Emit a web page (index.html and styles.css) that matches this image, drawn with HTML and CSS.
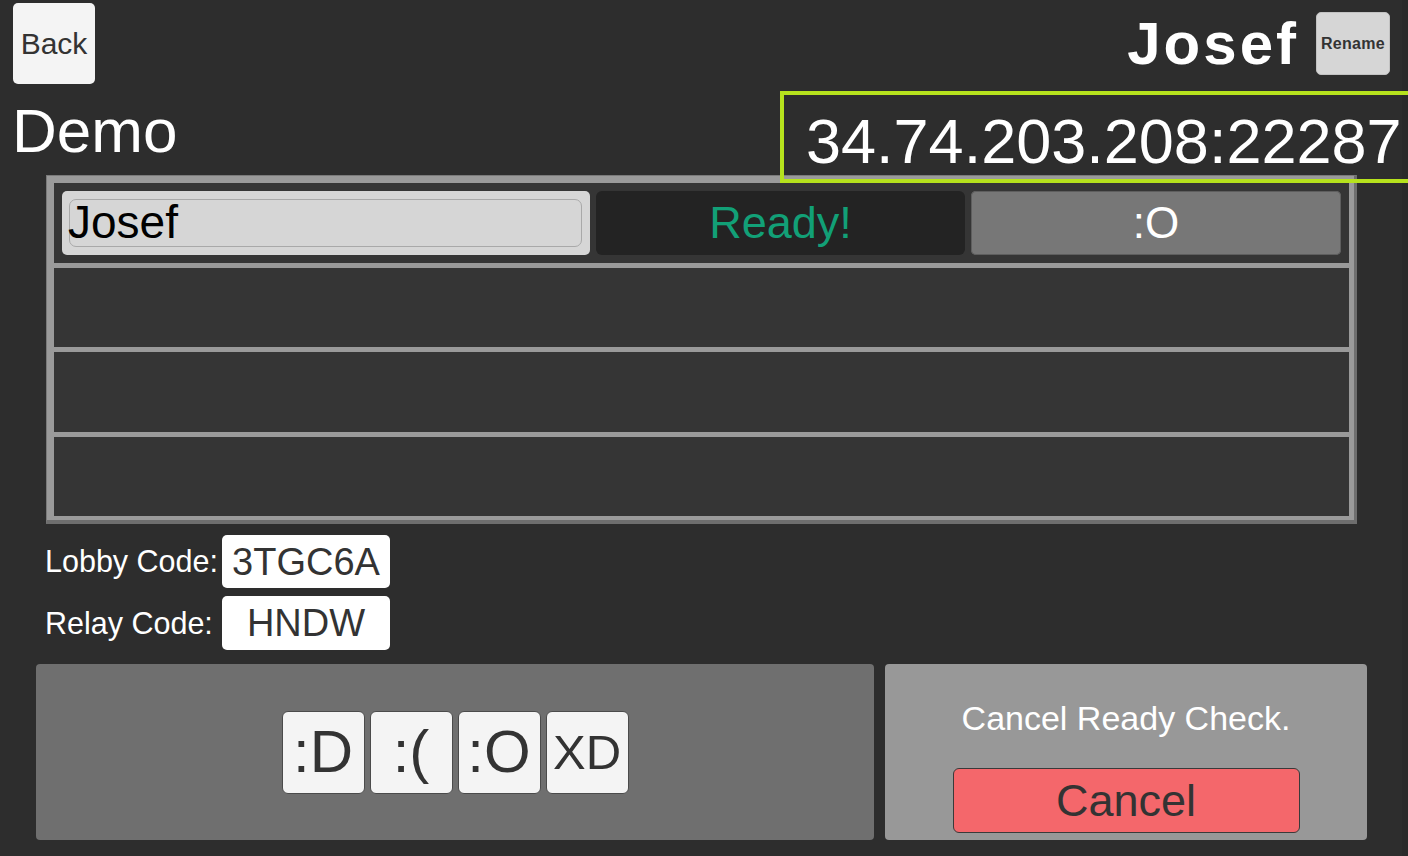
FILE: index.html
```html
<!DOCTYPE html>
<html lang="en">
<head>
<meta charset="utf-8">
<title>Lobby - Demo</title>
<link rel="stylesheet" href="styles.css">
</head>
<body>
<div class="screen">
  <header class="top">
    <button class="btn back">Back</button>
    <div class="user">
      <span class="user-name">Josef</span>
      <button class="btn rename">Rename</button>
    </div>
  </header>

  <div class="title-row">
    <h1 class="lobby-name">Demo</h1>
    <div class="address">34.74.203.208:22287</div>
  </div>

  <section class="players">
    <div class="player-row filled">
      <div class="name-field"><div class="name-inner">Josef</div></div>
      <div class="status">Ready!</div>
      <div class="emote">:O</div>
    </div>
    <div class="player-row"></div>
    <div class="player-row"></div>
    <div class="player-row"></div>
  </section>

  <div class="codes">
    <div class="code-line">
      <span class="code-label">Lobby Code:</span>
      <span class="code-box">3TGC6A</span>
    </div>
    <div class="code-line second">
      <span class="code-label">Relay Code:</span>
      <span class="code-box tall">HNDW</span>
    </div>
  </div>

  <div class="bottom">
    <div class="emotes-panel">
      <button class="btn emoji">:D</button>
      <button class="btn emoji">:(</button>
      <button class="btn emoji">:O</button>
      <button class="btn emoji small">XD</button>
    </div>
    <div class="ready-panel">
      <p class="ready-text">Cancel Ready Check.</p>
      <button class="btn cancel">Cancel</button>
    </div>
  </div>
</div>
</body>
</html>
```

FILE: styles.css
```css
html, body {
  margin: 0;
  padding: 0;
}

body {
  width: 1408px;
  height: 856px;
  overflow: hidden;
  background: #2a2a2a;
  font-family: "Liberation Sans", Arial, sans-serif;
}

.screen {
  width: 1402px;
  height: 856px;
  background: #2d2d2d;
}

.btn {
  font-family: inherit;
  padding: 0;
  margin: 0;
  border: none;
  cursor: pointer;
}

/* ---------- top bar ---------- */
.top {
  height: 91px;
  box-sizing: border-box;
  display: flex;
  justify-content: space-between;
  align-items: flex-start;
  padding: 3px 12px 0 13px;
}

.back {
  width: 82px;
  height: 81px;
  background: #f4f4f4;
  border-radius: 5px;
  color: #333;
  font-size: 30px;
  padding-top: 0;
  line-height: 1;
}

.user {
  display: flex;
  align-items: center;
  gap: 17px;
  margin-top: 9px;
}

.user-name {
  color: #fff;
  font-size: 60px;
  font-weight: bold;
  letter-spacing: 3px;
  line-height: 1;
}

.rename {
  width: 74px;
  height: 63px;
  background: #d6d6d6;
  border: 1px solid #c2c2c2;
  border-radius: 5px;
  color: #333;
  font-size: 16px;
  font-weight: bold;
  letter-spacing: 0.3px;
}

/* ---------- title row ---------- */
.title-row {
  height: 84px;
  display: flex;
  align-items: flex-start;
  position: relative;
  z-index: 1;
}

.lobby-name {
  margin: 9px 0 0 12px;
  color: #fff;
  font-size: 62px;
  font-weight: normal;
  line-height: 62px;
}

.address {
  margin-left: auto;
  margin-right: -6px;
  width: 628px;
  height: 92px;
  box-sizing: border-box;
  border: 4px solid #b6e21d;
  border-right: none;
  padding: 4px 0 0 22px;
  color: #fff;
  font-size: 63px;
  line-height: 84px;
  white-space: nowrap;
}

/* ---------- players panel ---------- */
.players {
  margin-left: 46px;
  width: 1311px;
  height: 349px;
  box-sizing: border-box;
  background: #9a9a9a;
  padding: 7px 5px 4px 7px;
  border-right: 3px solid #6e6e6e;
  border-bottom: 4px solid #6e6e6e;
  border-top: 1px solid #7a7a7a;
  border-left: 1px solid #7a7a7a;
  display: grid;
  grid-template-rows: repeat(4, 1fr);
  row-gap: 5px;
}

.player-row {
  background: #353535;
}

.player-row.filled {
  display: grid;
  grid-template-columns: 528px 369px 1fr;
  column-gap: 6px;
  padding: 8px;
}

.name-field {
  background: #d6d6d6;
  border-radius: 5px;
  padding: 8px 8px 8px 7px;
}

.name-inner {
  height: 100%;
  box-sizing: border-box;
  border: 1px solid #a9a9a9;
  border-radius: 7px;
  color: #000;
  font-size: 46px;
  line-height: 44px;
  text-indent: -2px;
}

.status {
  background: #232323;
  border-radius: 6px;
  color: #12a077;
  font-size: 45px;
  display: flex;
  align-items: center;
  justify-content: center;
}

.emote {
  background: #777;
  border-radius: 5px;
  box-shadow: inset 0 0 0 1px #5e5e5e;
  color: #fff;
  font-size: 44px;
  display: flex;
  align-items: center;
  justify-content: center;
}

/* ---------- codes ---------- */
.codes {
  margin: 11px 0 0 45px;
}

.code-line {
  display: flex;
  align-items: center;
}

.code-line.second {
  margin-top: 8px;
}

.code-label {
  width: 177px;
  color: #fff;
  font-size: 30.5px;
}

.code-box {
  width: 168px;
  height: 53px;
  background: #fff;
  border-radius: 5px;
  color: #333;
  font-size: 38px;
  line-height: 55px;
  text-align: center;
}

.code-box.tall {
  height: 54px;
}

/* ---------- bottom ---------- */
.bottom {
  display: flex;
  gap: 11px;
  margin: 14px 0 0 36px;
}

.emotes-panel {
  width: 838px;
  height: 176px;
  background: #6f6f6f;
  border-radius: 4px;
  display: flex;
  align-items: center;
  justify-content: center;
  gap: 5px;
}

.emoji {
  width: 83px;
  height: 83px;
  box-sizing: border-box;
  background: #f4f4f4;
  border: 1px solid #4b4b4b;
  border-radius: 6px;
  color: #333;
  font-size: 60px;
  line-height: 1;
}

.emoji.small {
  font-size: 49px;
}

.ready-panel {
  width: 482px;
  height: 176px;
  box-sizing: border-box;
  background: #989898;
  border-radius: 4px;
  padding-top: 34px;
  display: flex;
  flex-direction: column;
  align-items: center;
}

.ready-text {
  margin: 0;
  color: #fff;
  font-size: 34px;
  line-height: 40px;
}

.cancel {
  margin-top: 30px;
  width: 347px;
  height: 65px;
  box-sizing: border-box;
  background: #f4676b;
  border: 1px solid #3a3a3a;
  border-radius: 6px;
  color: #333;
  font-size: 45px;
}
```
